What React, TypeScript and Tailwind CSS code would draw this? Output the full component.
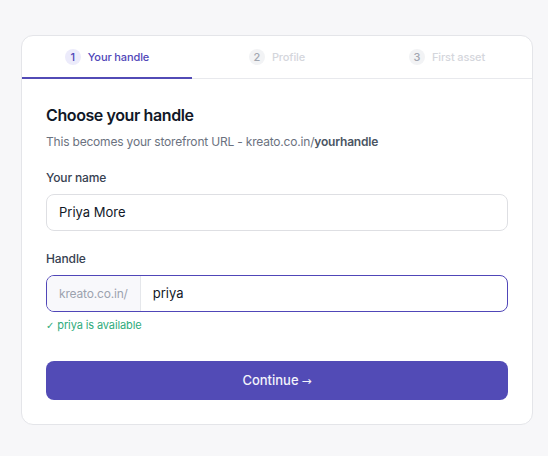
import React from "react";

function Tab({ n, label, active }: { n: number; label: string; active?: boolean }) {
  return (
    <div className="relative flex h-[42px] items-center justify-center gap-[7px]">
      <span
        className={
          active
            ? "flex h-4 w-4 items-center justify-center rounded-full bg-[#ecebfb] text-[11px] font-medium text-[#5046b8]"
            : "flex h-4 w-4 items-center justify-center rounded-full bg-[#f2f3f5] text-[11px] font-medium text-[#a1a6b0]"
        }
      >
        {n}
      </span>
      <span
        className={
          active
            ? "text-[11px] font-medium tracking-[-0.01em] text-[#5046b8]"
            : "text-[11px] font-medium tracking-[-0.01em] text-[#d4d6dc]"
        }
      >
        {label}
      </span>
      {active && <div className="absolute inset-x-0 -bottom-px h-[2px] bg-[#524bb6]" />}
    </div>
  );
}

export default function App() {
  return (
    <div
      className="min-h-[456px] w-full bg-[#f7f7f9] pl-[21px] pt-[35px]"
      style={{ fontFamily: "Inter, 'Noto Sans', sans-serif" }}
    >
      <div className="w-[512px] overflow-hidden rounded-xl border border-[#e4e5e9] bg-white">
        <div className="grid grid-cols-3 border-b border-[#e8e9ed]">
          <Tab n={1} label="Your handle" active />
          <Tab n={2} label="Profile" />
          <Tab n={3} label="First asset" />
        </div>
        <div className="px-6 pb-6 pt-6">
          <h1 className="text-base font-semibold leading-6 tracking-tight text-[#111827]">Choose your handle</h1>
          <p className="mt-[7px] text-xs leading-4 tracking-[-0.016em] text-[#6b7280]">
            This becomes your storefront URL - kreato.co.in/
            <span className="font-semibold text-[#4b5563]">yourhandle</span>
          </p>

          <label className="mt-5 block text-xs font-medium leading-4 tracking-[-0.01em] text-[#374151]">
            Your name
          </label>
          <div className="mt-2 flex h-[37px] items-center rounded-lg border border-[#dedfe3] px-3 text-[13px] text-[#111827]">
            Priya More
          </div>

          <label className="mt-5 block text-xs font-medium leading-4 tracking-[-0.01em] text-[#374151]">Handle</label>
          <div className="mt-2 flex h-[37px] overflow-hidden rounded-lg border border-[#5046b8]">
            <div className="flex items-center border-r border-[#e5e7eb] bg-[#f8f8fb] px-3 text-xs tracking-[-0.015em] text-[#9ca3af]">
              kreato.co.in/
            </div>
            <div className="flex flex-1 items-center px-3 text-[13px] text-[#111827]">priya</div>
          </div>
          <p className="mt-[5px] text-[11px] leading-4 tracking-[-0.01em] text-[#2eab7c]">
            <span style={{ fontFamily: "'DejaVu Sans', sans-serif" }} className="text-[10px]">✓</span> priya is available
          </p>

          <button className="mt-[27px] flex h-[39px] w-full items-center justify-center gap-[3px] rounded-lg bg-[#524bb6] text-[13px] font-medium text-[#f3f3fb]">
            <span>Continue</span>
            <span style={{ fontFamily: "'DejaVu Sans', sans-serif" }} className="text-[12px] font-normal leading-none">→</span>
          </button>
        </div>
      </div>
    </div>
  );
}
